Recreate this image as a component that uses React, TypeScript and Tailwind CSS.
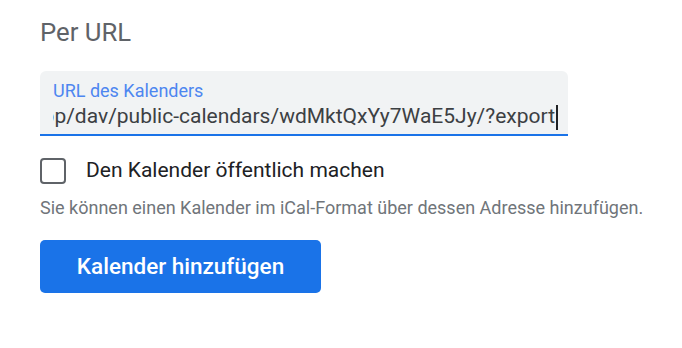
export default function App() {
  return (
    <div
      className="w-[682px] h-[348px] bg-white pl-10 pt-[16px]"
      style={{ fontFamily: "Roboto, 'Open Sans', sans-serif" }}
    >
      <h2 className="text-[25.7px] leading-[32px] text-[#5f6368]">Per URL</h2>

      <div className="mt-[23px] w-[528px] h-[65px] bg-[#f1f3f4] rounded-t-[6px] border-b-2 border-[#1a73e8] pl-[13px] pr-[10px] pt-[10px]">
        <div className="text-[18px] leading-[20px] text-[#4d86f0]">URL des Kalenders</div>
        <div className="flex justify-end items-center overflow-hidden whitespace-nowrap h-[28px] mt-[2px]">
          <span className="text-[21px] text-[#3c4043]">
            https://calendar.example.app/dav/public-calendars/wdMktQxYy7WaE5Jy/?export
          </span>
          <span className="shrink-0 w-[2px] h-[25px] bg-[#202124] ml-[1px]"></span>
        </div>
      </div>

      <label className="flex items-center mt-[22px] h-[26px]">
        <span className="w-[26px] h-[26px] rounded-[4px] border-2 border-[#5f6368]"></span>
        <span className="ml-[20px] text-[21px] text-[#202124]">Den Kalender öffentlich machen</span>
      </label>

      <p className="mt-[12px] text-[18px] leading-[24px] text-[#70757a]">
        Sie können einen Kalender im iCal-Format über dessen Adresse hinzufügen.
      </p>

      <button className="mt-[20px] w-[281px] h-[53px] rounded-[5px] bg-[#1a73e8] text-white text-[22.5px] font-medium">
        Kalender hinzufügen
      </button>
    </div>
  );
}
